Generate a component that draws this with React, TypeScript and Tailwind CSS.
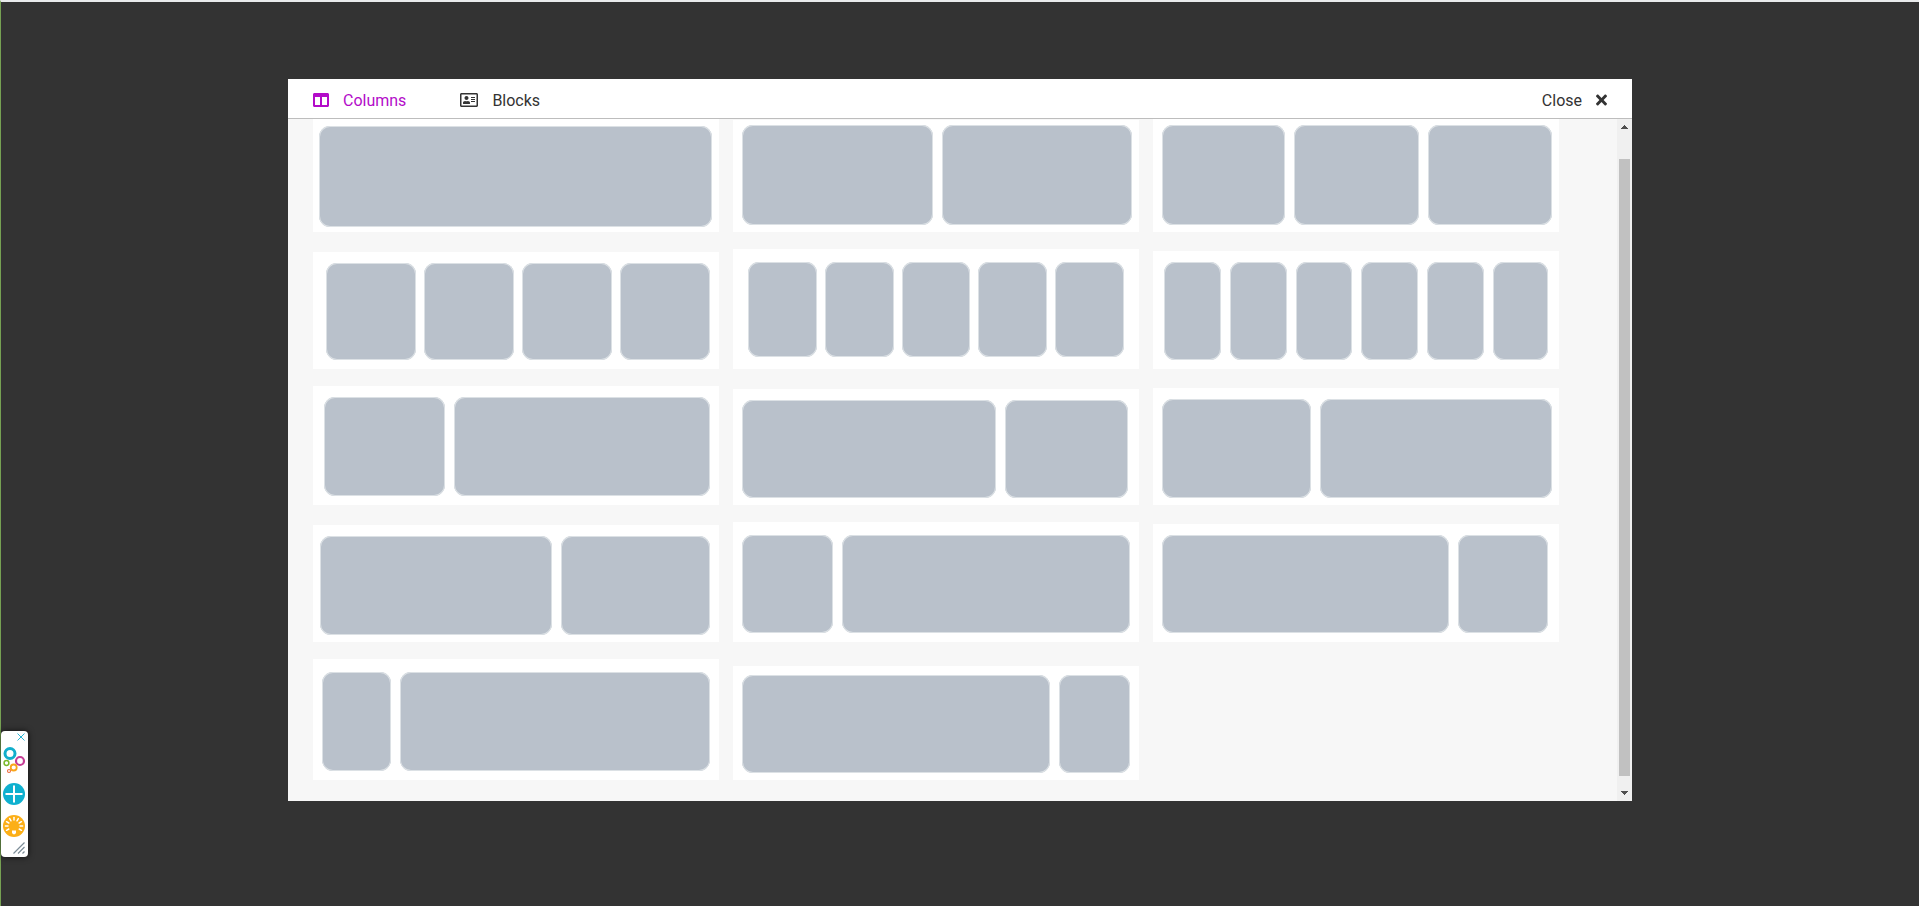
import { useState } from 'react';
import { FaColumns, FaRegAddressCard, FaTimes } from 'react-icons/fa';

type Layout = {
  name: string;
  box: string;
  cols: number[];
};

// cols are relative widths, each layout fills its own card
const layouts: Layout[] = [
  { name: '1 column', box: 'h-[113px] pt-[7px] pb-[5px] pl-[6px] pr-[7px]', cols: [393] },
  { name: '2 columns', box: 'h-[112px] pt-[5px] pb-[7px] pl-[9px] pr-[7px]', cols: [190, 190] },
  { name: '3 columns', box: 'h-[113px] pt-[6px] pb-[7px] pl-[9px] pr-[7px]', cols: [123, 125, 124] },
  { name: '4 columns', box: 'h-[117px] pt-[11px] pb-[9px] pl-[13px] pr-[9px]', cols: [90, 90, 90, 90] },
  { name: '5 columns', box: 'h-[120px] pt-[13px] pb-[12px] pl-[15px] pr-[15px]', cols: [69, 69, 67, 69, 69] },
  { name: '6 columns', box: 'h-[118px] pt-[11px] pb-[9px] pl-[11px] pr-[11px]', cols: [57, 57, 57, 57, 57, 55] },
  { name: '1/3 + 2/3', box: 'h-[119px] pt-[11px] pb-[9px] pl-[11px] pr-[9px]', cols: [121, 256] },
  { name: '2/3 + 1/3', box: 'h-[116px] pt-[11px] pb-[7px] pl-[9px] pr-[11px]', cols: [254, 123] },
  { name: '2/5 + 3/5', box: 'h-[117px] pt-[11px] pb-[7px] pl-[9px] pr-[7px]', cols: [149, 232] },
  { name: '3/5 + 2/5', box: 'h-[117px] pt-[11px] pb-[7px] pl-[7px] pr-[9px]', cols: [232, 149] },
  { name: '1/4 + 3/4', box: 'h-[120px] pt-[13px] pb-[9px] pl-[9px] pr-[9px]', cols: [91, 288] },
  { name: '3/4 + 1/4', box: 'h-[118px] pt-[11px] pb-[9px] pl-[9px] pr-[11px]', cols: [287, 90] },
  { name: '1/5 + 4/5', box: 'h-[121px] pt-[13px] pb-[9px] pl-[9px] pr-[9px]', cols: [69, 310] },
  { name: '4/5 + 1/5', box: 'h-[114px] pt-[9px] pb-[7px] pl-[9px] pr-[9px]', cols: [308, 71] },
];

function LayoutCard({ layout }: { layout: Layout }) {
  return (
    <button
      type="button"
      aria-label={layout.name}
      className={`flex items-stretch bg-white ${layout.cols.length > 3 && layout.cols.length < 6 ? 'gap-2' : 'gap-[9px]'} ${layout.box}`}
    >
      {layout.cols.map((width, i) => (
        <span
          key={i}
          className="basis-0 rounded-[11px] bg-[#b9c1cb] inset-ring inset-ring-[#dce1e5]"
          style={{ flexGrow: width }}
        />
      ))}
    </button>
  );
}

function ScrollBar() {
  return (
    <div className="flex w-[15px] shrink-0 flex-col items-center bg-[#f0f0f0]">
      <button type="button" aria-label="Scroll up" className="flex h-4 w-full items-center justify-center">
        <svg width="7" height="4" viewBox="0 0 7 4" shapeRendering="crispEdges">
          <path d="M3 0h1v1h1v1h1v1h1v1H0V3h1V2h1V1h1z" fill="#505050" />
        </svg>
      </button>
      <div className="mt-6 mb-2 w-[11px] flex-1 bg-[#c1c1c1]" />
      <button type="button" aria-label="Scroll down" className="flex h-[17px] w-full items-center justify-center">
        <svg width="7" height="4" viewBox="0 0 7 4" shapeRendering="crispEdges">
          <path d="M3 4h1V3h1V2h1V1h1V0H0v1h1v1h1v1h1z" fill="#505050" />
        </svg>
      </button>
    </div>
  );
}

function FloatingTools() {
  const rays = [-120, -90, -60, -30, 0, 30, 60, 90, 120];

  return (
    <aside className="fixed bottom-[49px] left-px flex w-[27px] flex-col items-center rounded-[4px] bg-white pr-px shadow-[0_0_6px_rgba(0,0,0,0.7)]">
      <button type="button" aria-label="Close tools" className="mt-[2px] mr-[2px] self-end">
        <svg width="8" height="8" viewBox="0 0 8 8" fill="none" stroke="#2bb5d4">
          <path d="M.5.5l7 7M7.5.5l-7 7" />
        </svg>
      </button>
      <button type="button" aria-label="Menu" className="mt-[5px]">
        <svg width="24" height="28" viewBox="0 0 24 28" fill="none">
          <circle cx="8" cy="7.5" r="5" stroke="#12aecb" strokeWidth="3" />
          <circle cx="18" cy="15" r="4" stroke="#c63d96" strokeWidth="2.2" />
          <circle cx="4.5" cy="17" r="2.4" stroke="#7ab929" strokeWidth="1.5" />
          <circle cx="11.7" cy="21.5" r="3" stroke="#f9a51a" strokeWidth="1.8" />
          <circle cx="7" cy="25" r="1.5" stroke="#ee6b3b" strokeWidth="1.1" />
        </svg>
      </button>
      <button type="button" aria-label="Add" className="mt-[9px]">
        <svg width="22" height="22" viewBox="0 0 22 22">
          <circle cx="11" cy="11" r="11" fill="#0fb0cf" />
          <path d="M11 2.5v17M2.5 11h17" stroke="#fff" strokeWidth="2" />
        </svg>
      </button>
      <button type="button" aria-label="Ideas" className="mt-[10px]">
        <svg width="22" height="22" viewBox="0 0 22 22">
          <circle cx="11" cy="11" r="11" fill="#fcaf17" />
          {rays.map((angle) => (
            <path
              key={angle}
              d="M11 2.4v2.6"
              stroke="#fff"
              strokeWidth="1.5"
              strokeLinecap="round"
              transform={`rotate(${angle} 11 11)`}
            />
          ))}
          <path d="M9 15.5h4v2.5l-1.2 1.3h-1.6L9 18z" fill="#fff" />
        </svg>
      </button>
      <svg className="mt-[5px] mr-[2px] mb-[3px] self-end" width="12" height="12" viewBox="0 0 12 12" fill="none">
        <path d="M.5 11.5l11-11M5 11.5L11.5 5M9.5 11.5l2-2" stroke="#7d8d98" strokeWidth="1.2" />
      </svg>
    </aside>
  );
}

export default function App() {
  const [tab, setTab] = useState('columns');

  return (
    <div className="min-h-screen overflow-hidden border-t-2 border-l border-t-[#e9ebec] border-l-[#76a153] bg-[#333] font-['Roboto',sans-serif] text-base text-[#333]">
      <div role="dialog" aria-label="Add content" className="mx-[287px] mt-[77px] bg-[#f7f7f7]">
        <header className="flex h-10 items-center justify-between border-b border-[#bdbdbd] bg-white px-[25px] pt-[3px]">
          <nav className="flex items-center gap-[54px]">
            <button
              type="button"
              onClick={() => setTab('columns')}
              className={`flex items-center gap-[14px] ${tab === 'columns' ? 'text-[#b30cc9]' : ''}`}
            >
              <FaColumns />
              <span className="pt-[2px]">Columns</span>
            </button>
            <button
              type="button"
              onClick={() => setTab('blocks')}
              className={`flex items-center gap-[14px] ${tab === 'blocks' ? 'text-[#b30cc9]' : ''}`}
            >
              <FaRegAddressCard className="h-4 w-[18px]" />
              <span className="pt-[2px]">Blocks</span>
            </button>
          </nav>
          <button type="button" className="flex items-center gap-[14px]">
            <span className="pt-[2px]">Close</span>
            <FaTimes className="h-4 w-[11px]" />
          </button>
        </header>

        <div className="flex">
          <main className="grid flex-1 grid-cols-3 items-end gap-x-[14px] gap-y-[17px] pr-[58px] pb-[21px] pl-[25px]">
            {layouts.map((layout) => (
              <LayoutCard key={layout.name} layout={layout} />
            ))}
          </main>
          <ScrollBar />
        </div>
      </div>

      <FloatingTools />
    </div>
  );
}
